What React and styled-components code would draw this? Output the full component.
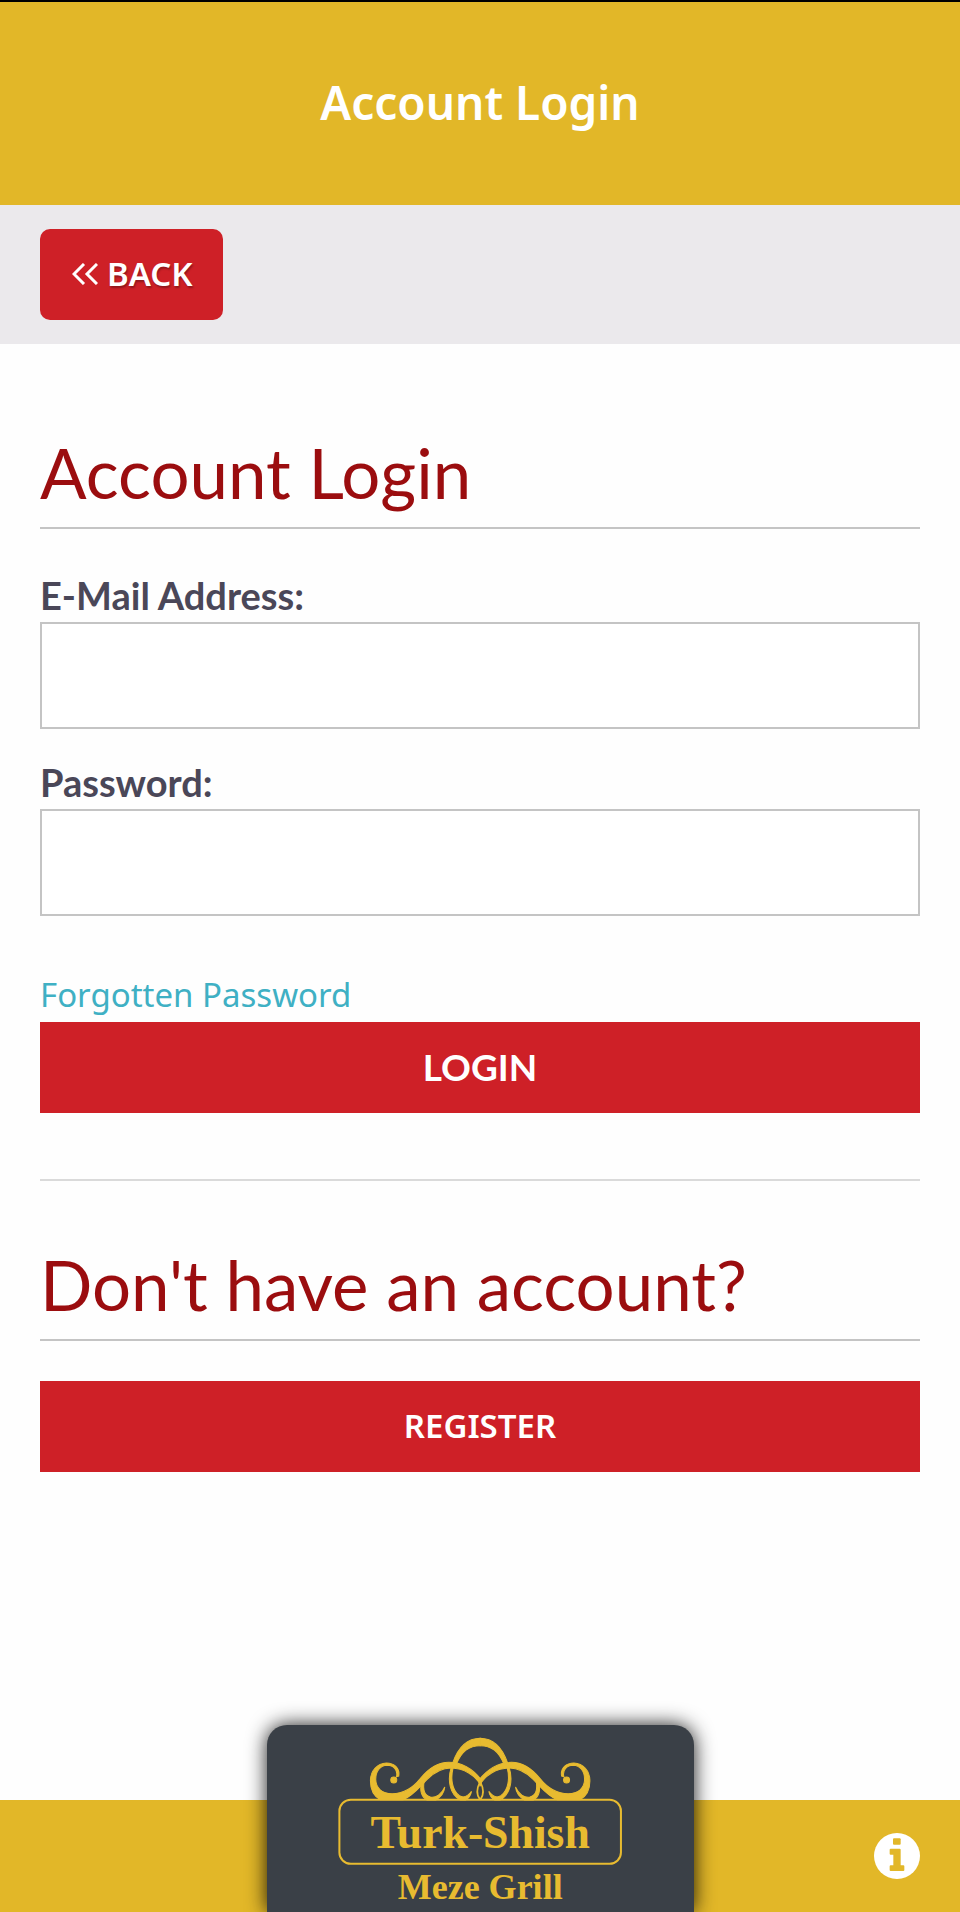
import React from 'react';
import styled, { createGlobalStyle } from 'styled-components';

const colors = {
  yellow: '#e2b728',
  red: '#ce2027',
  redDark: '#9b0d0f',
  gray: '#ebe9ec',
  grayLine: '#c4c4c4',
  grayText: '#4a4758',
  teal: '#3fb0c4',
  slate: '#3a4047',
  gold: '#e8bb30',
};

const GlobalStyle = createGlobalStyle`
  * {
    box-sizing: border-box;
  }
  body {
    margin: 0;
    background: #fefefe;
    font-family: Lato, sans-serif;
  }
`;

const Page = styled.div`
  display: flex;
  flex-direction: column;
  min-height: 100vh;
  border-top: 2px solid #000;
`;

const Header = styled.header`
  background: ${colors.yellow};
  padding: 64px 40px 67px;
  color: #fff;
  font-family: 'Noto Sans', sans-serif;
  font-size: 46px;
  font-weight: 600;
  line-height: 72px;
  text-align: center;
`;

const Toolbar = styled.nav`
  display: flex;
  background: ${colors.gray};
  padding: 24px 40px;
`;

const BackButton = styled.button`
  display: flex;
  align-items: center;
  gap: 9px;
  background: ${colors.red};
  height: 91px;
  padding: 0 30px 2px 32px;
  border: none;
  border-radius: 10px;
  color: #fff;
  font-family: 'Noto Sans', sans-serif;
  font-size: 33px;
  font-weight: 600;
  text-shadow: 1px 2px 2px rgba(0, 0, 0, 0.3);
`;

const Content = styled.main`
  flex: 1;
  padding: 87px 40px 40px;
`;

const Title = styled.h1`
  margin: 0 0 40px;
  padding-bottom: 12px;
  border-bottom: 2px solid ${colors.grayLine};
  color: ${colors.redDark};
  font-size: 69px;
  font-weight: 400;
  line-height: 84px;
`;

const Form = styled.form`
  padding-bottom: 66px;
  border-bottom: 2px solid #dadada;
  margin-bottom: 62px;
`;

const Field = styled.div`
  display: flex;
  flex-direction: column;
  margin-bottom: 27px;
`;

const Label = styled.label`
  padding: 3px 0 4px;
  color: ${colors.grayText};
  font-size: 38px;
  font-weight: 700;
  line-height: 46px;
`;

const Input = styled.input`
  height: 107px;
  padding: 0 20px;
  border: 2px solid ${colors.grayLine};
  border-radius: 0;
  background: #fff;
  font: inherit;
  font-size: 36px;
`;

const ForgottenLink = styled.a`
  display: block;
  margin: 55px 0 3px;
  color: ${colors.teal};
  font-family: 'Noto Sans', sans-serif;
  font-size: 33px;
  line-height: 48px;
  text-decoration: none;
`;

const Button = styled.button`
  display: block;
  width: 100%;
  height: 91px;
  padding: 0 0 2px;
  border: none;
  background: ${colors.red};
  color: #fff;
  font-family: ${(props) => (props.$alt ? "'Noto Sans'" : 'Lato')}, sans-serif;
  font-size: ${(props) => (props.$alt ? 33 : 37)}px;
  font-weight: ${(props) => (props.$alt ? 600 : 700)};
`;

const Footer = styled.footer`
  display: grid;
  grid-template-columns: 1fr 427px 1fr;
  grid-template-rows: 112px;
  align-items: end;
  background: ${colors.yellow};
`;

const LogoLink = styled.a`
  grid-column: 2;
  height: 187px;
  border-radius: 20px 20px 0 0;
  background: ${colors.slate};
  box-shadow: 0 0 20px rgba(0, 0, 0, 0.9);
  overflow: hidden;
  svg {
    display: block;
    width: 100%;
  }
`;

const InfoButton = styled.button`
  display: flex;
  justify-self: end;
  align-self: center;
  margin-right: 40px;
  padding: 0;
  border: none;
  background: none;
`;

const Scroll = () => (
  <>
    <path d="M445 228C449 203 430 189 408 189C380 190 360 212 360 243C360 272 372 290 390 299H458C480 292 500 270 520 249C545 220 570 204 602 204C640 205 675 225 690 256L693 240C668 208 635 187 595 187C560 187 535 205 510 235C490 260 465 281 425 281C395 281 376 264 376 238C376 212 390 197 410 196C430 196 443 211 438 230Z" />
    <circle cx="430" cy="240" r="9" />
    <path d="M689 115C652 115 624 140 607 188L619 190C632 156 655 137 689 137Z" />
    <path d="M602 203C590 240 598 284 630 300H645C656 294 661 286 663 274C652 289 638 294 627 287C604 270 600 235 608 203Z" />
    <path d="M514 246C506 272 514 292 530 300H556C570 292 581 280 583 261C574 282 556 294 540 291C522 287 517 268 521 243Z" />
    <path d="M689 244C679 264 677 284 688 298" fill="none" strokeWidth="5" />
  </>
);

const Logo = () => (
  <svg viewBox="50 75 1280 561" role="img" aria-label="Turk-Shish Meze Grill">
    <g fill={colors.gold}>
      <g stroke={colors.gold} strokeWidth="3">
        <Scroll />
        <g transform="translate(1378 0) scale(-1 1)">
          <Scroll />
        </g>
      </g>
      <rect
        x="267"
        y="299"
        width="844"
        height="192"
        rx="34"
        fill="none"
        stroke={colors.gold}
        strokeWidth="6"
      />
      <g fontFamily="'Liberation Serif', serif" fontWeight="700" textAnchor="middle">
        <text x="689" y="444" fontSize="137">
          Turk-Shish
        </text>
        <text x="689" y="596" fontSize="108">
          Meze Grill
        </text>
      </g>
    </g>
  </svg>
);

const BackArrows = () => (
  <svg width="26" height="22" viewBox="0 0 26 22" fill="none" stroke="#fff" strokeWidth="3">
    <path d="M12 1L2 11L12 21M25 1L15 11L25 21" />
  </svg>
);

const InfoIcon = () => (
  <svg width="46" height="46" viewBox="0 0 138 138">
    <circle cx="69" cy="69" r="69" fill="#fff" />
    <g fill={colors.yellow}>
      <rect x="57" y="16" width="23" height="19" rx="3" />
      <path d="M50 47H77Q80 47 80 50V97H88Q91 97 91 100V111Q91 114 88 114H50Q47 114 47 111V100Q47 97 50 97H58V65H50Q47 65 47 62V50Q47 47 50 47Z" />
    </g>
  </svg>
);

const App = () => {
  return (
    <>
      <GlobalStyle />
      <Page>
        <Header>Account Login</Header>
        <Toolbar>
          <BackButton type="button">
            <BackArrows />
            BACK
          </BackButton>
        </Toolbar>
        <Content>
          <Title>Account Login</Title>
          <Form onSubmit={(e) => e.preventDefault()}>
            <Field>
              <Label htmlFor="email">E-Mail Address:</Label>
              <Input id="email" type="email" />
            </Field>
            <Field>
              <Label htmlFor="password">Password:</Label>
              <Input id="password" type="password" />
            </Field>
            <ForgottenLink href="#forgotten">Forgotten Password</ForgottenLink>
            <Button type="submit">LOGIN</Button>
          </Form>
          <Title as="h2">Don&apos;t have an account?</Title>
          <Button type="button" $alt>
            REGISTER
          </Button>
        </Content>
        <Footer>
          <LogoLink href="#home">
            <Logo />
          </LogoLink>
          <InfoButton type="button" aria-label="Information">
            <InfoIcon />
          </InfoButton>
        </Footer>
      </Page>
    </>
  );
};

export default App;
